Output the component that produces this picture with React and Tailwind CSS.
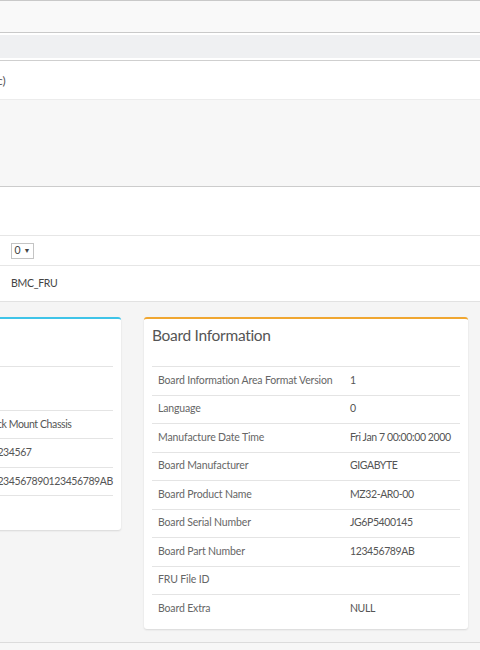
import React from "react";

const board = [
  ["Board Information Area Format Version", "1"],
  ["Language", "0"],
  ["Manufacture Date Time", "Fri Jan 7 00:00:00 2000"],
  ["Board Manufacturer", "GIGABYTE"],
  ["Board Product Name", "MZ32-AR0-00"],
  ["Board Serial Number", "JG6P5400145"],
  ["Board Part Number", "123456789AB"],
  ["FRU File ID", ""],
  ["Board Extra", "NULL"],
];

const chassis = [
  ["Chassis Information Area Format Version", "1", "h-[44px]"],
  ["Chassis Type", "Rack Mount Chassis", "h-[28px]"],
  ["Chassis Part Number", "01234567", "h-[29px]"],
  ["Chassis Serial Number", "01234567890123456789AB", "h-[28px]"],
  ["Chassis Extra", "", "h-[29px]"],
];

function Card({ title, accent, children }) {
  return (
    <div className={`w-[324px] shrink-0 self-start bg-white border-t-2 ${accent} rounded-[3px] shadow-[0_1px_2px_rgba(0,0,0,0.12)] px-[8px] pb-[6px]`}>
      <div className="h-[47px] pt-[4px] text-[15.5px] leading-[24px] tracking-[-0.3px] text-[#555]">{title}</div>
      {children}
    </div>
  );
}

export default function App() {
  return (
    <div
      className="w-[480px] h-[650px] overflow-hidden bg-white text-[#555]"
      style={{ fontFamily: "Lato, 'Open Sans', sans-serif" }}
    >
      <div className="h-[33px] border-t border-b border-[#c9c9c9] bg-[#f9f9f9]" />
      <div className="h-[28px] pt-[2px] pb-[2px] border-b border-[#cfcfcf] bg-white">
        <div className="h-[23px] bg-[#eff0f2]" />
      </div>
      <div className="h-[39px] border-b border-[#ececec] bg-white flex items-center text-[12px]">
        <span className="-ml-[28px] pt-[2px]">(Basic)</span>
      </div>
      <div className="h-[87px] border-b border-[#cccccc] bg-[#f7f7f7]" />
      <div className="h-[49px] border-b border-[#e6e6e6] bg-white" />
      <div className="h-[30px] border-b border-[#e6e6e6] bg-white flex items-center pl-[11px]">
        <div className="w-[23px] h-[16px] border border-[#c4c4c4] flex items-center justify-center gap-[3px] text-[10.5px] leading-none text-[#444]">
          <span>0</span>
          <span className="text-[7px]">▼</span>
        </div>
      </div>
      <div className="h-[36px] border-b border-[#e2e2e2] bg-white flex items-center pl-[11px] text-[10.5px] tracking-[-0.3px] text-[#444]">
        BMC_FRU
      </div>
      <div className="h-[341px] border-b border-[#dcdcdc] bg-[#f5f5f5] pt-[15px]">
        <div className="-ml-[215px] w-[695px] px-[12px] flex gap-[23px]">
          <Card title="Chassis Information" accent="border-[#3fc4e8]">
            {chassis.map(([k, v, h]) => (
              <div key={k} className={`${h} border-t border-[#e4e4e4] flex items-center text-[10.5px]`}>
                <div className="w-[175px] shrink-0 pl-[6px] pr-[6px] text-[#666] leading-[15px] tracking-[-0.15px]">{k}</div>
                <div className="pl-[6px] text-[#555] whitespace-nowrap tracking-[-0.4px]">{v}</div>
              </div>
            ))}
          </Card>
          <Card title="Board Information" accent="border-[#f0a732]">
            {board.map(([k, v]) => (
              <div key={k} className="h-[28.5px] border-t border-[#e4e4e4] flex items-center text-[10.5px]">
                <div className="w-[192px] shrink-0 pl-[6px] pr-[6px] text-[#666] whitespace-nowrap tracking-[-0.15px]">{k}</div>
                <div className="pl-[6px] text-[#555] whitespace-nowrap tracking-[-0.4px]">{v}</div>
              </div>
            ))}
          </Card>
        </div>
      </div>
      <div className="h-[7px] bg-[#f7f7f7]" />
    </div>
  );
}
